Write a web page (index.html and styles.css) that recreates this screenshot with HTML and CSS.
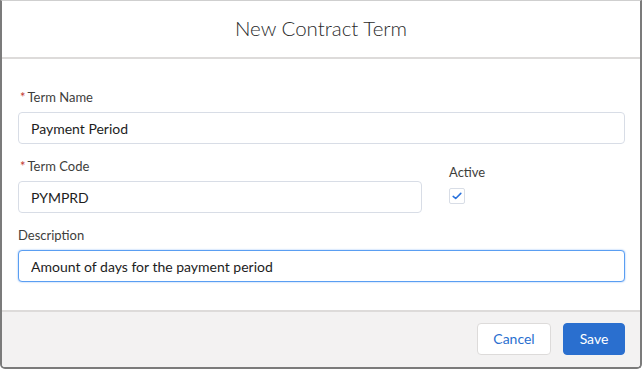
FILE: index.html
```html
<!DOCTYPE html>
<html lang="en">
<head>
  <meta charset="UTF-8">
  <title>New Contract Term</title>
  <link rel="stylesheet" href="styles.css">
</head>
<body>
  <div class="modal">
    <header class="modal-header">
      <h2 class="modal-title">New Contract Term</h2>
    </header>

    <div class="modal-body">
      <div class="field">
        <label class="label"><abbr class="req">*</abbr>Term Name</label>
        <input class="input" type="text" value="Payment Period">
      </div>

      <div class="row">
        <div class="field code">
          <label class="label"><abbr class="req">*</abbr>Term Code</label>
          <input class="input" type="text" value="PYMPRD">
        </div>
        <div class="field active">
          <label class="label">Active</label>
          <span class="checkbox">
            <svg width="10" height="8" viewBox="0 0 10 8">
              <path d="M1.2 4.4 L3.7 6.5 L8.8 1.4" fill="none" stroke="#2a72dc" stroke-width="1.6" stroke-linecap="round" stroke-linejoin="round"/>
            </svg>
          </span>
        </div>
      </div>

      <div class="field">
        <label class="label">Description</label>
        <input class="input focus" type="text" value="Amount of days for the payment period">
      </div>
    </div>

    <footer class="modal-footer">
      <button class="btn btn-neutral">Cancel</button>
      <button class="btn btn-brand">Save</button>
    </footer>
  </div>
</body>
</html>
```

FILE: styles.css
```css
html, body {
  margin: 0;
  height: 100%;
}

body {
  background: #fff;
  font-family: 'Lato', 'Open Sans', sans-serif;
  color: #16325c;
}

.modal {
  box-sizing: border-box;
  height: 369px;
  display: flex;
  flex-direction: column;
  border: 2px solid #7b7b7b;
  border-top: 1px solid #cfcfcf;
  border-radius: 0 0 5px 5px;
  overflow: hidden;
}

.modal-header {
  height: 56px;
  display: flex;
  align-items: center;
  justify-content: center;
  border-bottom: 2px solid #dddbda;
}

.modal-title {
  margin: 0 0 3px;
  font-size: 20.5px;
  font-weight: 300;
  color: #2b2b2b;
}

.modal-body {
  flex: 1;
  padding: 30px 15px 0 16px;
}

.field {
  margin-bottom: 14px;
}

.label {
  display: block;
  font-size: 13px;
  color: #3e3e3c;
  margin-bottom: 7px;
  line-height: 16px;
}

.req {
  color: #c23934;
  text-decoration: none;
  margin-right: 2px;
  margin-left: 2px;
}

.input {
  box-sizing: border-box;
  display: block;
  width: 100%;
  height: 32px;
  padding: 0 12px;
  font-family: inherit;
  font-size: 14px;
  color: #1d1d1d;
  border: 1px solid #d8dde6;
  border-radius: 4px;
  background: #fff;
  outline: none;
}

.input.focus {
  border-color: #5a9ef2;
  box-shadow: 0 0 2px #8ab8f5;
}

.row {
  display: flex;
}

.code {
  width: 404px;
}

.active {
  margin-left: 27px;
  padding-top: 6px;
}

.checkbox {
  box-sizing: border-box;
  display: flex;
  align-items: center;
  justify-content: center;
  width: 16px;
  height: 16px;
  margin-top: 8px;
  border: 1px solid #d8dde6;
  border-radius: 2px;
}

.modal-footer {
  height: 57px;
  box-sizing: border-box;
  background: #f3f2f2;
  border-top: 2px solid #dddbda;
  display: flex;
  justify-content: flex-end;
  align-items: center;
  gap: 12px;
  padding: 0 15px 2px 0;
}

.btn {
  height: 32px;
  padding: 0 15px;
  font-family: inherit;
  font-size: 14px;
  border-radius: 4px;
  cursor: pointer;
}

.btn-neutral {
  width: 74px;
  background: #fff;
  color: #2a6fcf;
  border: 1px solid #dddbda;
}

.btn-brand {
  width: 62px;
  background: #2a6fcf;
  color: #fff;
  border: 1px solid #2a6fcf;
}
```
